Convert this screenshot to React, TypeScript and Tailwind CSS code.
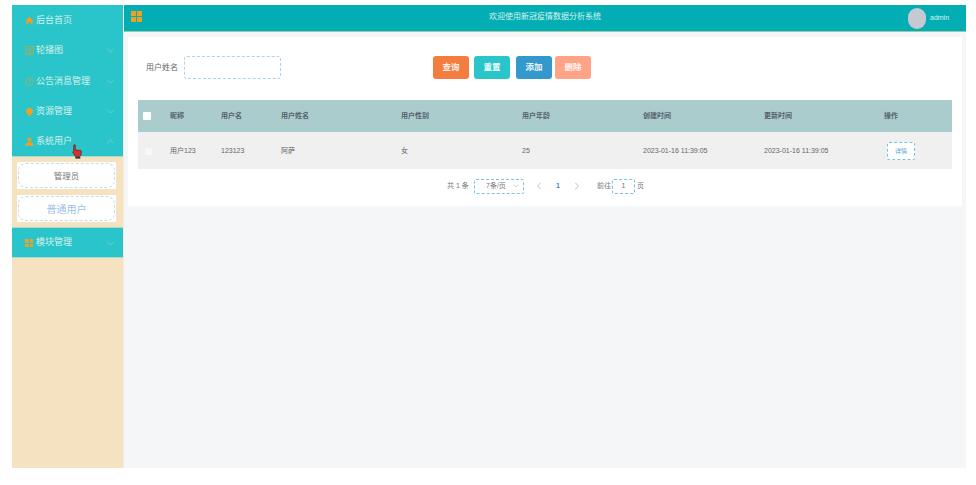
import { ChevronDown, ChevronUp, ChevronLeft, ChevronRight } from 'lucide-react';
import { ReactNode } from 'react';

const orange = 'text-[#f0a020]';

const HomeIcon = () => (
  <svg viewBox="0 0 12 12" className={`w-[9px] h-[9px] ${orange}`} fill="currentColor">
    <path d="M6 1 L11.5 6.5 L10 6.5 L10 11 L7.5 11 L7.5 8 L4.5 8 L4.5 11 L2 11 L2 6.5 L.5 6.5 Z" />
  </svg>
);
const PictureIcon = () => (
  <svg viewBox="0 0 12 12" className={`w-[9px] h-[9px] opacity-70 ${orange}`} fill="none" stroke="currentColor" strokeWidth="1.2">
    <rect x="1" y="1" width="10" height="10" />
    <circle cx="6" cy="5" r="2" />
    <path d="M2 9.5 H10" />
  </svg>
);
const InfoIcon = () => (
  <svg viewBox="0 0 12 12" className={`w-[9px] h-[9px] opacity-70 ${orange}`} fill="none" stroke="currentColor" strokeWidth="1.1">
    <circle cx="6" cy="6" r="5" />
    <path d="M6 3 V7 M6 8.2 V9.2" />
  </svg>
);
const PinIcon = () => (
  <svg viewBox="0 0 12 12" className={`w-[9px] h-[10px] ${orange}`} fill="currentColor">
    <path d="M6 .5 C9 .5 10.5 2.6 10.5 5 C10.5 7.6 7.6 10 6 11.5 C4.4 10 1.5 7.6 1.5 5 C1.5 2.6 3 .5 6 .5 Z" />
  </svg>
);
const UserIcon = () => (
  <svg viewBox="0 0 12 12" className={`w-[9px] h-[9px] ${orange}`} fill="currentColor">
    <circle cx="6" cy="3.5" r="2.8" />
    <path d="M.5 11.5 C.5 8.5 3 7 6 7 C9 7 11.5 8.5 11.5 11.5 Z" />
  </svg>
);
const GridIcon = ({ size }: { size: string }) => (
  <div className={`grid grid-cols-2 gap-px ${size}`}>
    <span className="bg-[#f0a020]" />
    <span className="bg-[#f0a020]" />
    <span className="bg-[#f0a020]" />
    <span className="bg-[#f0a020]" />
  </div>
);

function MenuItem({ icon, label, chevron, h = 'h-[30.5px]' }: { icon: ReactNode; label: string; chevron?: 'up' | 'down'; h?: string }) {
  return (
    <div className={`${h} flex items-center pl-[13px] pr-[6px] text-[9px] text-[#d8f0e8]`}>
      <span className="w-[11px] flex justify-start">{icon}</span>
      <span>{label}</span>
      {chevron === 'down' && <ChevronDown className="ml-auto text-[#7fd0c4]" size={13} strokeWidth={1.5} />}
      {chevron === 'up' && <ChevronUp className="ml-auto text-[#7fd0c4]" size={13} strokeWidth={1.5} />}
    </div>
  );
}

function SubItem({ label, active }: { label: string; active?: boolean }) {
  return (
    <div className="bg-white p-px h-[27px] ml-[5px] mr-[7px]">
      <div className={`h-full flex items-center justify-center pt-px rounded-[8px] border border-dashed border-[#c4dcf0] ${active ? 'text-[10px] text-[#9cc0ea]' : 'text-[8.5px] text-[#777]'}`}>
        {label}
      </div>
    </div>
  );
}

const gridCols = 'grid grid-cols-[32px_51px_60px_120px_121px_121px_121px_120px_68px] items-center';

function Action({ label, color, className }: { label: string; color: string; className: string }) {
  return <button className={`w-[36px] h-[23px] rounded-[3px] text-[8.5px] font-bold text-white/90 ${color} ${className}`}>{label}</button>;
}

export default function App() {
  return (
    <div className="w-[976px] h-[485px] bg-white overflow-hidden pt-[5px] pl-[12px] pr-[10px] pb-[17px] font-['Liberation_Sans','Noto_Sans_CJK_SC',sans-serif]">
      <div className="relative flex h-full">
        <aside className="w-[112px] bg-[#f4e2c0] border-r border-[#f2ecdf] shrink-0">
          <div className="bg-[#2ac5cb] h-[151px]">
            <MenuItem icon={<HomeIcon />} label="后台首页" />
            <MenuItem icon={<PictureIcon />} label="轮播图" chevron="down" />
            <MenuItem icon={<InfoIcon />} label="公告消息管理" chevron="down" />
            <MenuItem icon={<PinIcon />} label="资源管理" chevron="down" />
            <MenuItem h="h-[29px]" icon={<UserIcon />} label="系统用户" chevron="up" />
          </div>
          <div className="h-[71px] flex flex-col pt-[5px] gap-[6px] border-t border-[#a8dcc8]">
            <SubItem label="管理员" />
            <SubItem label="普通用户" active />
          </div>
          <div className="bg-[#2ac5cb] h-[31px] border-y border-[#a8dcc8]">
            <MenuItem h="h-[30px]" icon={<GridIcon size="w-[8px] h-[8px]" />} label="模块管理" chevron="down" />
          </div>
        </aside>

        <main className="flex-1 bg-[#f5f6f8] flex flex-col">
          <header className="h-[27px] bg-[#02aeb4] border-b border-[#9cc9a0] flex items-center pl-[7px] pr-[16px] text-[#d9f3f1] shrink-0">
            <GridIcon size="w-[11px] h-[11px] -mt-[4px]" />
            <div className="flex-1 text-center text-[8px] pl-[40px] -mt-[2px]">欢迎使用新冠疫情数据分析系统</div>
            <div className="w-[18px] h-[21px] rounded-full bg-[#c6c9d2] mr-[4px]" />
            <span className="text-[7px] w-[20px]">admin</span>
          </header>

          <section className="mt-[5px] mx-[4px] h-[169px] bg-white px-[10px]">
            <div className="flex items-center h-[63px] pb-[2px]">
              <span className="ml-[8px] w-[38px] text-[8px] text-[#666]">用户姓名</span>
              <div className="w-[97px] h-[23px] rounded-[3px] border border-dashed border-[#a8d4ec]" />
              <Action className="ml-[152px]" label="查询" color="bg-[#f47c3f]" />
              <Action className="ml-[5px]" label="重置" color="bg-[#2ac5cb]" />
              <Action className="ml-[6px]" label="添加" color="bg-[#3399cc]" />
              <Action className="ml-[3px]" label="删除" color="bg-[#ffa386]" />
            </div>

            <div className={`${gridCols} h-[32px] bg-[#aacccc] text-[7px] font-bold text-[#56626c]`}>
              <span className="pl-[5px]"><span className="block w-[8px] h-[8px] bg-white rounded-[1px]" /></span>
              <span>昵称</span>
              <span>用户名</span>
              <span>用户姓名</span>
              <span>用户性别</span>
              <span>用户年龄</span>
              <span>创建时间</span>
              <span>更新时间</span>
              <span>操作</span>
            </div>
            <div className={`${gridCols} h-[37px] pt-px bg-[#f0f0f0] text-[7px] text-[#666]`}>
              <span className="pl-[7px]"><span className="block w-[7px] h-[7px] bg-[#f8f8f8] rounded-[1px]" /></span>
              <span>用户123</span>
              <span>123123</span>
              <span>阿萨</span>
              <span>女</span>
              <span>25</span>
              <span>2023-01-16 11:39:05</span>
              <span>2023-01-16 11:39:05</span>
              <span>
                <button className="w-[28px] h-[18px] ml-[3px] bg-white border border-dashed border-[#7cc0e4] rounded-[2px] text-[6px] text-[#4aa0d8]">详情</button>
              </span>
            </div>

            <div className="flex items-center h-[37px] pb-[3px] text-[7px] text-[#777] pl-[309px]">
              <span className="w-[27px]">共 1 条</span>
              <div className="w-[50px] h-[15px] border border-dashed border-[#7cc0e4] rounded-[2px] flex items-center justify-between pl-[11px] pr-[3px]">
                <span>7条/页</span>
                <ChevronDown size={8} className="text-[#bbb]" />
              </div>
              <ChevronLeft size={12} strokeWidth={1.5} className="ml-[9px] text-[#aaa]" />
              <span className="ml-[11px] text-[#3a86d8] font-bold">1</span>
              <ChevronRight size={12} strokeWidth={1.5} className="ml-[11px] text-[#aaa]" />
              <span className="ml-[14px]">前往</span>
              <div className="ml-px w-[23px] h-[15px] border border-dashed border-[#7cc0e4] rounded-[2px] flex items-center justify-center">1</div>
              <span className="ml-[2px]">页</span>
            </div>
          </section>
        </main>

        {/* mouse cursor caught in the screenshot */}
        <svg viewBox="0 0 12 18" className="absolute left-[60px] top-[139px] w-[10px] h-[15px]">
          <path d="M2 1.5 C2 .5 4 .5 4 1.5 L4 7 L11 8 L11 13 L9.5 15 L4 15 L.8 9.5 L2 8.5 Z" fill="#d8302a" stroke="#5a2020" strokeWidth=".8" />
          <rect x="4" y="15.5" width="6" height="2" fill="#333" />
        </svg>
      </div>
    </div>
  );
}
